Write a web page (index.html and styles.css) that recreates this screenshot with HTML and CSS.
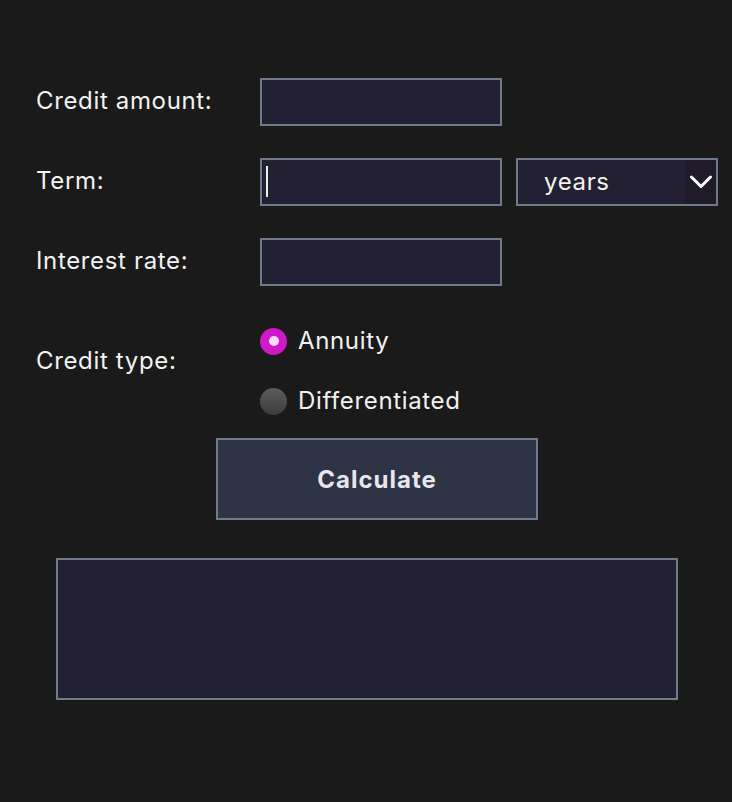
FILE: index.html
```html
<!DOCTYPE html>
<html lang="en">
<head>
<meta charset="utf-8">
<title>Credit calculator</title>
<link rel="stylesheet" href="styles.css">
</head>
<body>
<main class="calc">
  <div class="row">
    <label class="label" for="amount">Credit amount:</label>
    <input class="field" id="amount" type="text">
  </div>
  <div class="row">
    <label class="label" for="term">Term:</label>
    <div class="controls">
      <div class="field-wrap">
        <input class="field" id="term" type="text">
        <span class="caret"></span>
      </div>
      <div class="select-wrap">
        <select class="select">
          <option>years</option>
          <option>months</option>
        </select>
        <span class="select-arrow">
          <svg width="24" height="14" viewBox="0 0 24 14"><path d="M2.5 2 L12 11.5 L21.5 2" fill="none" stroke="#ffffff" stroke-width="3" stroke-linecap="round" stroke-linejoin="round"/></svg>
        </span>
      </div>
    </div>
  </div>
  <div class="row">
    <label class="label" for="rate">Interest rate:</label>
    <input class="field" id="rate" type="text">
  </div>
  <div class="row row-type">
    <span class="label label-type">Credit type:</span>
    <div class="radios">
      <label class="radio"><input type="radio" name="type" checked><span>Annuity</span></label>
      <label class="radio"><input type="radio" name="type"><span>Differentiated</span></label>
    </div>
  </div>
  <button class="calc-btn" type="button">Calculate</button>
  <div class="result"></div>
</main>
</body>
</html>
```
FILE: styles.css
```css
html, body {
  margin: 0;
  padding: 0;
  background: #1a1a1a;
}
body {
  font-family: Inter, "Noto Sans", "Liberation Sans", sans-serif;
  font-size: 24px;
  letter-spacing: 0.65px;
  color: #f2f2f2;
  height: 802px;
}
.calc {
  padding: 78px 0 0 36px;
  display: flex;
  flex-direction: column;
}
.row {
  display: grid;
  grid-template-columns: 224px auto;
  align-items: center;
  margin-bottom: 32px;
}
.label {
  font-size: 24px;
  line-height: 28px;
  padding-bottom: 3px;
  color: #f2f2f2;
}
.controls {
  display: flex;
  gap: 14px;
}
.field-wrap {
  position: relative;
  width: 242px;
  height: 48px;
}
.caret {
  position: absolute;
  left: 6px;
  top: 8px;
  width: 2px;
  height: 31px;
  background: #ececec;
}
.field {
  box-sizing: border-box;
  width: 242px;
  height: 48px;
  margin: 0;
  background: #242033;
  border: 2px solid #6f7b88;
  border-radius: 0;
  color: #f2f2f2;
  font-family: inherit;
  font-size: 24px;
  padding: 0 6px;
  outline: none;
}
.select-wrap {
  position: relative;
  width: 202px;
  height: 48px;
}
.select {
  appearance: none;
  -webkit-appearance: none;
  box-sizing: border-box;
  width: 202px;
  height: 48px;
  margin: 0;
  background: #242033;
  border: 2px solid #6f7b88;
  border-radius: 0;
  color: #f2f2f2;
  font-family: inherit;
  font-size: 24px;
  letter-spacing: 0.65px;
  padding: 0 0 2px 26px;
  outline: none;
}
.select-arrow {
  position: absolute;
  top: 2px;
  right: 2px;
  width: 31px;
  height: 44px;
  background: #1f1b2b;
  display: flex;
  align-items: center;
  justify-content: center;
  pointer-events: none;
}
.row-type {
  align-items: start;
  margin-top: 9px;
  margin-bottom: 23px;
}
.label-type {
  margin-top: 20px;
}
.radios {
  display: flex;
  flex-direction: column;
  gap: 32px;
}
.radio {
  display: flex;
  align-items: center;
  gap: 11px;
  height: 28px;
  line-height: 28px;
}
.radio input {
  appearance: none;
  -webkit-appearance: none;
  margin: 0;
  width: 27px;
  height: 27px;
  border-radius: 50%;
  background: linear-gradient(#5c5c5c, #3c3c3c);
  border: none;
  display: flex;
  align-items: center;
  justify-content: center;
}
.radio input:checked {
  background: #cf18c8;
}
.radio input:checked::after {
  content: "";
  width: 10px;
  height: 10px;
  border-radius: 50%;
  background: #f9dcf5;
}
.calc-btn {
  box-sizing: border-box;
  align-self: flex-start;
  margin-left: 180px;
  width: 322px;
  height: 82px;
  background: #2f3346;
  border: 2px solid #6f7b88;
  border-radius: 0;
  color: #e6e6ee;
  font-family: inherit;
  font-size: 24px;
  font-weight: 700;
  letter-spacing: 1px;
}
.result {
  box-sizing: border-box;
  margin-top: 38px;
  margin-left: 20px;
  width: 622px;
  height: 142px;
  background: #242033;
  border: 2px solid #6f7b88;
}
```
